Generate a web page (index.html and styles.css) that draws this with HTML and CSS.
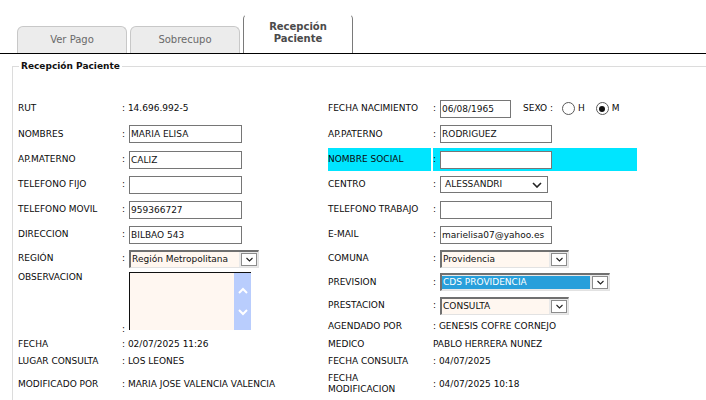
FILE: index.html
```html
<!DOCTYPE html>
<html lang="es">
<head>
<meta charset="utf-8">
<title>Recepción Paciente</title>
<link rel="stylesheet" href="styles.css">
</head>
<body>
<div class="tabs">
  <div class="tab">Ver Pago</div>
  <div class="tab">Sobrecupo</div>
  <div class="tab active">Recepción<br>Paciente</div>
</div>
<fieldset class="box">
  <legend>Recepción Paciente</legend>
  <div class="grid">
    <div class="l">RUT</div>
    <div class="v">: 14.696.992-5</div>
    <div class="l">FECHA NACIMIENTO</div>
    <div class="v"><span class="c">:</span><input class="in w70" value="06/08/1965"><span class="sexo">SEXO :</span><span class="radio"></span><span class="rl">H</span><span class="radio on"></span><span class="rl">M</span></div>

    <div class="l">NOMBRES</div>
    <div class="v"><span class="c">:</span><input class="in" value="MARIA ELISA"></div>
    <div class="l">AP.PATERNO</div>
    <div class="v"><span class="c">:</span><input class="in w112" value="RODRIGUEZ"></div>

    <div class="l">AP.MATERNO</div>
    <div class="v"><span class="c">:</span><input class="in" value="CALIZ"></div>
    <div class="l hl">NOMBRE SOCIAL</div>
    <div class="v hl"><span class="c">:</span><input class="in w112" value=""></div>

    <div class="l">TELEFONO FIJO</div>
    <div class="v"><span class="c">:</span><input class="in" value=""></div>
    <div class="l">CENTRO</div>
    <div class="v"><span class="c">:</span><div class="msel"><span>ALESSANDRI</span><svg width="10" height="6" viewBox="0 0 10 6"><path d="M1 1l4 4 4-4" fill="none" stroke="#222" stroke-width="1.6"/></svg></div></div>

    <div class="l">TELEFONO MOVIL</div>
    <div class="v"><span class="c">:</span><input class="in" value="959366727"></div>
    <div class="l">TELEFONO TRABAJO</div>
    <div class="v"><span class="c">:</span><input class="in w112" value=""></div>

    <div class="l">DIRECCION</div>
    <div class="v"><span class="c">:</span><input class="in" value="BILBAO 543"></div>
    <div class="l">E-MAIL</div>
    <div class="v"><span class="c">:</span><input class="in w112" value="marielisa07@yahoo.es"></div>

    <div class="l">REGIÓN</div>
    <div class="v"><span class="c">:</span><div class="osel w130"><span class="ot">Región Metropolitana</span><span class="ob"><svg width="7" height="5" viewBox="0 0 7 5"><path d="M0.5 1l3 3 3-3" fill="none" stroke="#222" stroke-width="1.1"/></svg></span></div></div>
    <div class="l">COMUNA</div>
    <div class="v"><span class="c">:</span><div class="osel w129"><span class="ot">Providencia</span><span class="ob"><svg width="7" height="5" viewBox="0 0 7 5"><path d="M0.5 1l3 3 3-3" fill="none" stroke="#222" stroke-width="1.1"/></svg></span></div></div>

    <div class="l top span3">OBSERVACION</div>
    <div class="v bottom span3"><span class="c">:</span><div class="ta"><div class="ta-area"></div><div class="ta-bar"><svg width="10" height="7" viewBox="0 0 10 7"><path d="M1 6l4-4 4 4" fill="none" stroke="#fff" stroke-width="2"/></svg><svg width="10" height="7" viewBox="0 0 10 7"><path d="M1 1l4 4 4-4" fill="none" stroke="#fff" stroke-width="2"/></svg></div></div></div>
    <div class="l">PREVISION</div>
    <div class="v"><span class="c">:</span><div class="osel w170"><span class="ot sel">CDS PROVIDENCIA</span><span class="ob"><svg width="7" height="5" viewBox="0 0 7 5"><path d="M0.5 1l3 3 3-3" fill="none" stroke="#222" stroke-width="1.1"/></svg></span></div></div>

    <div class="l">PRESTACION</div>
    <div class="v"><span class="c">:</span><div class="osel w129"><span class="ot">CONSULTA</span><span class="ob"><svg width="7" height="5" viewBox="0 0 7 5"><path d="M0.5 1l3 3 3-3" fill="none" stroke="#222" stroke-width="1.1"/></svg></span></div></div>

    <div class="l">AGENDADO POR</div>
    <div class="v">: GENESIS COFRE CORNEJO</div>

    <div class="l">FECHA</div>
    <div class="v">: 02/07/2025 11:26</div>
    <div class="l">MEDICO</div>
    <div class="v">PABLO HERRERA NUNEZ</div>

    <div class="l">LUGAR CONSULTA</div>
    <div class="v">: LOS LEONES</div>
    <div class="l">FECHA CONSULTA</div>
    <div class="v">: 04/07/2025</div>

    <div class="l">MODIFICADO POR</div>
    <div class="v">: MARIA JOSE VALENCIA VALENCIA</div>
    <div class="l">FECHA<br>MODIFICACION</div>
    <div class="v">: 04/07/2025 10:18</div>
  </div>
</fieldset>
</body>
</html>
```
FILE: styles.css
```css
html, body {
  margin: 0;
  padding: 0;
  overflow: hidden;
  background: #fff;
}
body {
  width: 706px;
  height: 400px;
  font-family: "DejaVu Sans", sans-serif;
  font-size: 9px;
  line-height: 11px;
  color: #0a0a0a;
}

/* tabs */
.tabs {
  display: flex;
  align-items: flex-end;
  gap: 3px;
  height: 39px;
  padding: 14px 0 0 17px;
  border-bottom: 1px solid #000;
}
.tab {
  box-sizing: border-box;
  width: 110px;
  height: 27px;
  border: 1px solid #c8c8c8;
  border-bottom: 0;
  border-radius: 6px 6px 0 0;
  background: #ececec;
  color: #6a6a6a;
  font-size: 10px;
  line-height: 12px;
  display: flex;
  align-items: center;
  justify-content: center;
  text-align: center;
}
.tab.active {
  height: 39px;
  background: #fff;
  border-color: transparent #7a7a7a #7a7a7a #7a7a7a;
  border-radius: 5px 5px 0 0;
  color: #4a4a4a;
  font-weight: bold;
  padding-bottom: 2px;
}

/* fieldset */
.box {
  box-sizing: border-box;
  width: 694px;
  margin: 7px 0 0 12px;
  padding: 0 0 10px 5px;
  border: 1px solid #dcdcdc;
  border-right: 0;
}
.box legend {
  font-weight: bold;
  padding: 0 2px;
  margin-left: 1px;
  color: #111;
  line-height: 11px;
}

.grid {
  display: grid;
  grid-template-columns: 102px 204px 103px 204px;
  grid-template-rows: 23px 24px 23px 23px 23px 23px 21px 22px 21px 17px 15px 15px 26px;
  column-gap: 2px;
  row-gap: 2px;
  margin-top: 25px;
}
.l {
  display: flex;
  align-items: center;
}
.l.top {
  align-items: flex-start;
  padding-top: 1px;
}
.span3 {
  grid-row: span 3;
}
.v {
  display: flex;
  align-items: center;
  white-space: nowrap;
}
.v.bottom {
  align-items: flex-end;
}
.hl {
  background: #00e5ff;
}
.c {
  margin: 0 4px 0 0;
}

/* inputs */
.in {
  box-sizing: border-box;
  width: 113px;
  height: 18px;
  margin: 0;
  padding: 0 1px;
  border: 1px solid #767676;
  border-radius: 0;
  background: #fff;
  font-family: "DejaVu Sans", sans-serif;
  font-size: 9px;
  color: #111;
  outline: none;
}
.in.w70 { width: 71px; }
.in.w112 { width: 112px; }

.sexo { margin-left: 12px; margin-right: 9px; }
.radio {
  box-sizing: border-box;
  width: 13px;
  height: 13px;
  border: 1px solid #5a5a5a;
  border-radius: 50%;
  background: #fff;
  display: flex;
  align-items: center;
  justify-content: center;
}
.radio.on::after {
  content: "";
  width: 6px;
  height: 6px;
  border-radius: 50%;
  background: #111;
}
.rl { margin: 0 11px 0 3px; }

/* modern select */
.msel {
  box-sizing: border-box;
  width: 108px;
  height: 17px;
  border: 1px solid #767676;
  background: #fff;
  display: flex;
  align-items: center;
  justify-content: space-between;
  padding: 0 5px 0 4px;
  color: #111;
}

/* classic select */
.osel {
  box-sizing: border-box;
  height: 18px;
  border-style: solid;
  border-width: 2px 1px 1px 2px;
  border-color: #707070 #e2e2e2 #e2e2e2 #707070;
  background: #e9e9e9;
  display: flex;
  align-items: stretch;
  padding: 1px 1px 1px 0;
  gap: 2px;
}
.osel.w130 { width: 130px; }
.osel.w129 { width: 129px; }
.osel.w170 { width: 170px; }
.ot {
  flex: 1;
  background: #fff7f0;
  padding-left: 1px;
  display: flex;
  align-items: center;
  color: #111;
  margin: -1px 0 -1px 0;
}
.ot.sel {
  background: #289fdb;
  color: #fff;
  margin: 0;
}
.ob {
  box-sizing: border-box;
  width: 16px;
  border: 1px solid #8c8c8c;
  background: #fff;
  display: flex;
  align-items: center;
  justify-content: center;
}

/* textarea */
.ta {
  box-sizing: border-box;
  width: 122px;
  height: 58px;
  border-top: 1px solid #111;
  border-left: 1px solid #111;
  display: flex;
  margin-bottom: 5px;
}
.ta-area {
  flex: 1;
  background: #fff7f1;
}
.ta-bar {
  width: 17px;
  background: #b9cdfd;
  display: flex;
  flex-direction: column;
  align-items: center;
  justify-content: center;
  gap: 15px;
}
```
